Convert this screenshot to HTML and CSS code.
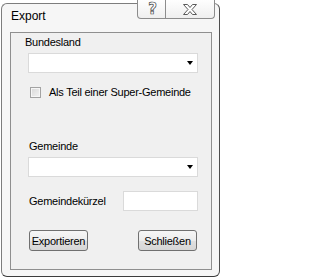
FILE: index.html
```html
<!DOCTYPE html>
<html>
<head>
<meta charset="utf-8">
<link rel="stylesheet" href="styles.css">
</head>
<body>
<div class="window">
  <div class="caption">
    <div class="cap-btn help"><span class="help-glyph">?</span></div>
    <div class="cap-btn close">
      <svg width="14" height="11" viewBox="0 0 14 11"><polygon points="0.5,0.5 4.5,0.5 7,3.5 9.5,0.5 13.5,0.5 9,5.5 13.5,10.5 9.5,10.5 7,7.5 4.5,10.5 0.5,10.5 5,5.5" fill="#fff" stroke="#5a5a5a" stroke-width="1" stroke-linejoin="round"/></svg>
    </div>
  </div>
  <div class="titlebar"><span class="title">Export</span></div>
  <div class="panel">
    <div class="label lbl-bundesland">Bundesland</div>
    <div class="combo"><span class="arrow"></span></div>
    <div class="check-row"><span class="checkbox"></span><span class="check-text">Als Teil einer Super-Gemeinde</span></div>
    <div class="label lbl-gemeinde">Gemeinde</div>
    <div class="combo"><span class="arrow"></span></div>
    <div class="kuerzel-row"><span class="label lbl-kuerzel">Gemeindekürzel</span><span class="textbox"></span></div>
    <div class="button-row"><button class="btn">Exportieren</button><button class="btn">Schließen</button></div>
  </div>
</div>
</body>
</html>
```
FILE: styles.css
```css
html, body {
  margin: 0;
  padding: 0;
  width: 221px;
  height: 278px;
  overflow: hidden;
  background: #ffffff;
}
body {
  font-family: "Liberation Sans", Arial, sans-serif;
  font-size: 11px;
  letter-spacing: -0.25px;
  color: #000;
}
.window {
  position: relative;
  box-sizing: border-box;
  margin: 3px 0 0 1px;
  width: 219px;
  height: 274px;
  border: 1px solid #7d7d7d;
  border-right-color: #4e4e4e;
  border-bottom-color: #3c3c3c;
  border-radius: 6px;
  background: #f6f6f6;
  display: flex;
  flex-direction: column;
}
.caption {
  position: absolute;
  top: -4px;
  left: 135px;
  display: flex;
  height: 19px;
}
.cap-btn {
  box-sizing: border-box;
  height: 19px;
  border: 1px solid #8c8c8c;
  border-top: none;
  background: linear-gradient(#fefefe, #efefef);
  display: flex;
  align-items: center;
  justify-content: center;
}
.help {
  width: 29px;
  border-bottom-left-radius: 4px;
}
.close {
  width: 49px;
  border-left: none;
  border-bottom-right-radius: 4px;
}
.help-glyph {
  font-family: "DejaVu Sans", "Liberation Sans", sans-serif;
  font-weight: bold;
  font-size: 15px;
  line-height: 15px;
  letter-spacing: 0;
  color: #fff;
  -webkit-text-stroke: 0.7px #4a4a4a;
  margin-top: 1px;
  margin-left: 2px;
}
.close svg {
  display: block;
  margin-top: 1px;
}
.titlebar {
  box-sizing: border-box;
  height: 28px;
  padding: 5px 0 0 9px;
  font-size: 12px;
  line-height: 14px;
  letter-spacing: 0;
  flex: none;
}
.panel {
  flex: 1;
  margin: 0 7px 6px 8px;
  border: 1px solid #8f8f8f;
  background: #f0f0f0;
  padding: 3px 0 0 17px;
  display: flex;
  flex-direction: column;
  align-items: flex-start;
}
.label {
  line-height: 13px;
  white-space: nowrap;
}
.lbl-bundesland {
  margin-left: -3px;
}
.lbl-gemeinde {
  margin-top: 41px;
  margin-left: 1px;
}
.combo {
  box-sizing: border-box;
  width: 170px;
  height: 20px;
  margin-top: 4px;
  border: 1px solid #dadada;
  background: #fff;
  display: flex;
  align-items: center;
  justify-content: flex-end;
  padding-right: 4px;
}
.arrow {
  width: 0;
  height: 0;
  border-left: 3.5px solid transparent;
  border-right: 3.5px solid transparent;
  border-top: 4px solid #000;
}
.check-row {
  margin-top: 13px;
  margin-left: 2px;
  height: 13px;
  line-height: 13px;
  display: flex;
  align-items: center;
}
.checkbox {
  box-sizing: border-box;
  width: 11px;
  height: 11px;
  border: 1px solid #a3a3a3;
  background: linear-gradient(135deg, #d8d8d8, #f4f4f4);
  box-shadow: inset 0 0 0 1px #f6f6f6;
  margin-right: 8px;
}
.check-text {
  white-space: nowrap;
}
.kuerzel-row {
  margin-top: 14px;
  width: 170px;
  display: flex;
  align-items: center;
}
.lbl-kuerzel {
  margin-left: 1px;
}
.textbox {
  box-sizing: border-box;
  margin-left: auto;
  width: 75px;
  height: 20px;
  border: 1px solid #dadada;
  background: #fff;
}
.button-row {
  margin-top: 19px;
  margin-left: 1px;
  width: 168px;
  display: flex;
  justify-content: space-between;
}
.btn {
  box-sizing: border-box;
  width: 59px;
  height: 21px;
  padding: 0;
  font-family: "Liberation Sans", Arial, sans-serif;
  font-size: 11px;
  letter-spacing: -0.25px;
  color: #000;
  border: 1px solid #707070;
  border-radius: 3px;
  background: linear-gradient(#f6f6f6 0%, #ececec 50%, #e0e0e0 51%, #d6d6d6 100%);
}
```
